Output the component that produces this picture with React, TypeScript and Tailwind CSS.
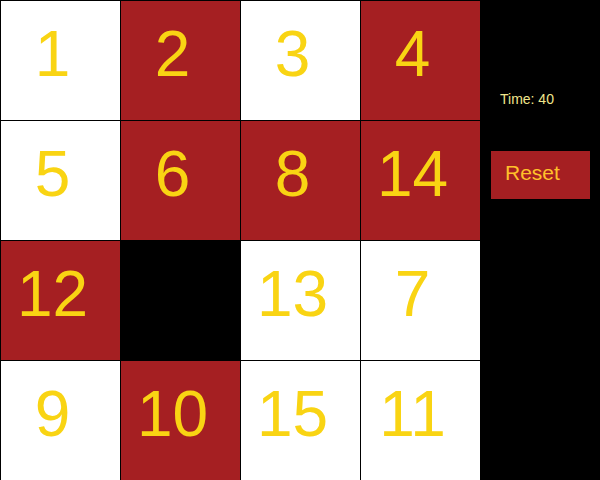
import React from "react";

const tiles: (number | null)[] = [1, 2, 3, 4, 5, 6, 8, 14, 12, null, 13, 7, 9, 10, 15, 11];
const red = new Set([2, 4, 6, 8, 14, 12, 10]);

export default function App() {
  return (
    <div className="flex w-[600px] h-[480px] bg-black" style={{ fontFamily: '"Liberation Sans", Arial, sans-serif' }}>
      <div className="grid grid-cols-4 w-[480px] h-[480px]">
        {tiles.map((t, i) => (
          <div
            key={i}
            className={`w-[120px] h-[120px] box-border border-l border-t border-black flex items-center justify-center pr-[16px] ${
              t === null ? "bg-black" : red.has(t) ? "bg-[#a51f22]" : "bg-white"
            }`}
          >
            {t !== null && (
              <span className="text-[64px] text-[#f9d413] mb-[14px]" style={{ lineHeight: "normal" }}>
                {t}
              </span>
            )}
          </div>
        ))}
      </div>
      <div className="w-[120px] h-[480px] bg-black flex flex-col items-start pl-[11px] pt-[91px]">
        <div className="ml-[9px] text-[14px] leading-[16px] text-[#f0e68c]">Time: 40</div>
        <button className="mt-[44px] w-[99px] h-[48px] bg-[#a51f22] text-left pl-[14px] pb-[4px] text-[21px] text-[#ffc12a]">
          Reset
        </button>
      </div>
    </div>
  );
}
